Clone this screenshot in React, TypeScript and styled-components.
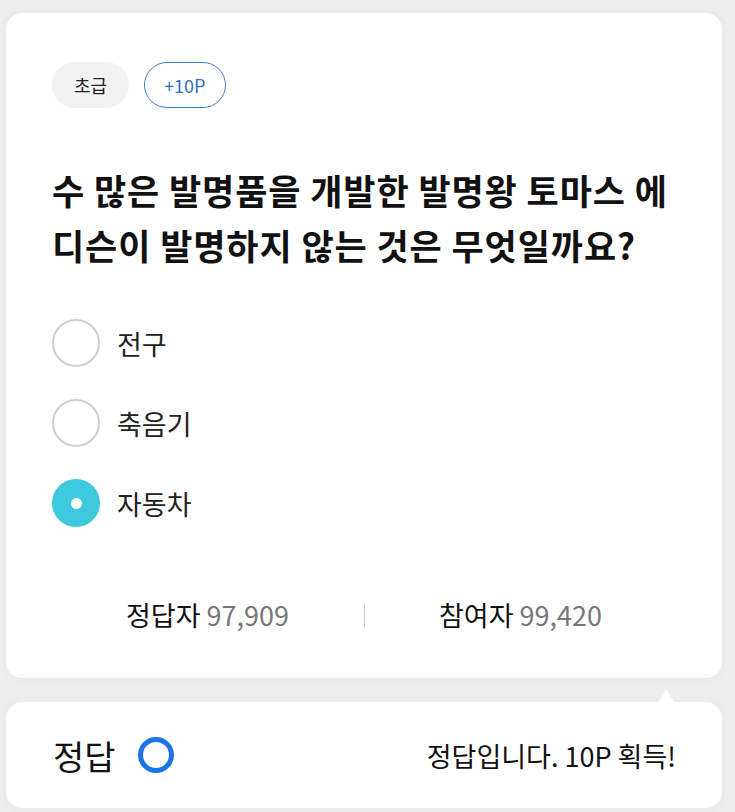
import React from "react";
import styled, { createGlobalStyle } from "styled-components";

const Global = createGlobalStyle`
  html, body { margin: 0; padding: 0; background: #efefef; }
  body { font-family: "Noto Sans CJK KR", "Noto Sans", sans-serif; color: #111; }
  * { box-sizing: border-box; }
`;

const Page = styled.div`
  width: 735px;
  height: 812px;
  padding: 13px 13px 4px 6px;
  display: flex;
  flex-direction: column;
  gap: 24px;
  overflow: hidden;
`;

const Card = styled.div`
  background: #fff;
  border-radius: 16px;
  box-shadow: 0 0 10px rgba(0, 0, 0, 0.05);
  padding: 49px 46px 53px 46px;
  display: flex;
  flex-direction: column;
`;

const Badges = styled.div`
  display: flex;
  gap: 15px;
  height: 46px;
`;

const Badge = styled.span<{ $outline?: boolean }>`
  display: inline-flex;
  align-items: center;
  justify-content: center;
  height: 46px;
  padding: 0 ${(p) => (p.$outline ? "19px" : "22px")};
  border-radius: 23px;
  font-size: 18px;
  background: ${(p) => (p.$outline ? "#fff" : "#f2f2f2")};
  border: ${(p) => (p.$outline ? "1.5px solid #3f7fcf" : "none")};
  color: ${(p) => (p.$outline ? "#2f6fc4" : "#222")};
`;

const Title = styled.h1`
  margin: 54px 0 0 0;
  font-size: 35px;
  line-height: 55px;
  font-weight: 700;
  color: #111;
  letter-spacing: 0.9px;
`;

const Options = styled.div`
  margin-top: 47px;
  display: flex;
  flex-direction: column;
  gap: 32px;
`;

const Option = styled.label`
  display: flex;
  align-items: center;
  gap: 17px;
  height: 48px;
  font-size: 27px;
  color: #222;
`;

const Radio = styled.span<{ $checked?: boolean }>`
  width: 48px;
  height: 48px;
  border-radius: 50%;
  flex: none;
  display: flex;
  align-items: center;
  justify-content: center;
  background: ${(p) => (p.$checked ? "#3ec9de" : "#fff")};
  border: ${(p) => (p.$checked ? "none" : "2px solid #cfcfcf")};
  &::after {
    content: "";
    display: ${(p) => (p.$checked ? "block" : "none")};
    width: 11px;
    height: 11px;
    border-radius: 50%;
    background: #fff;
  }
`;

const Stats = styled.div`
  margin-top: 68px;
  display: grid;
  grid-template-columns: 1fr 2px 1fr;
  align-items: center;
  height: 30px;
`;

const Stat = styled.div`
  text-align: center;
  font-size: 27px;
  color: #111;
`;

const Num = styled.span`
  color: #777;
`;

const Divider = styled.div`
  width: 1px;
  height: 24px;
  background: #d0d0d0;
  justify-self: center;
`;

const ResultCard = styled.div`
  position: relative;
  background: #fff;
  border-radius: 16px;
  box-shadow: 0 0 10px rgba(0, 0, 0, 0.05);
  height: 106px;
  flex: none;
  padding: 0 46px 0 47px;
  display: flex;
  align-items: center;
  justify-content: space-between;
`;

const Tail = styled.span`
  position: absolute;
  top: -12px;
  left: 652px;
  width: 0;
  height: 0;
  border-left: 8px solid transparent;
  border-right: 8px solid transparent;
  border-bottom: 12px solid #fff;
`;

const ResultLeft = styled.div`
  display: flex;
  align-items: center;
  gap: 22px;
  font-size: 34px;
  color: #111;
`;

const Ring = styled.span`
  width: 36px;
  height: 36px;
  border-radius: 50%;
  border: 5px solid #1c74e6;
`;

const ResultText = styled.div`
  font-size: 27px;
  color: #111;
`;

export default function App() {
  return (
    <>
      <Global />
      <Page>
        <Card>
          <Badges>
            <Badge>초급</Badge>
            <Badge $outline>+10P</Badge>
          </Badges>
          <Title>수 많은 발명품을 개발한 발명왕 토마스 에디슨이 발명하지 않는 것은 무엇일까요?</Title>
          <Options>
            <Option>
              <Radio />
              전구
            </Option>
            <Option>
              <Radio />
              축음기
            </Option>
            <Option>
              <Radio $checked />
              자동차
            </Option>
          </Options>
          <Stats>
            <Stat>
              정답자 <Num>97,909</Num>
            </Stat>
            <Divider />
            <Stat>
              참여자 <Num>99,420</Num>
            </Stat>
          </Stats>
        </Card>
        <ResultCard>
          <Tail />
          <ResultLeft>
            정답
            <Ring />
          </ResultLeft>
          <ResultText>정답입니다. 10P 획득!</ResultText>
        </ResultCard>
      </Page>
    </>
  );
}
